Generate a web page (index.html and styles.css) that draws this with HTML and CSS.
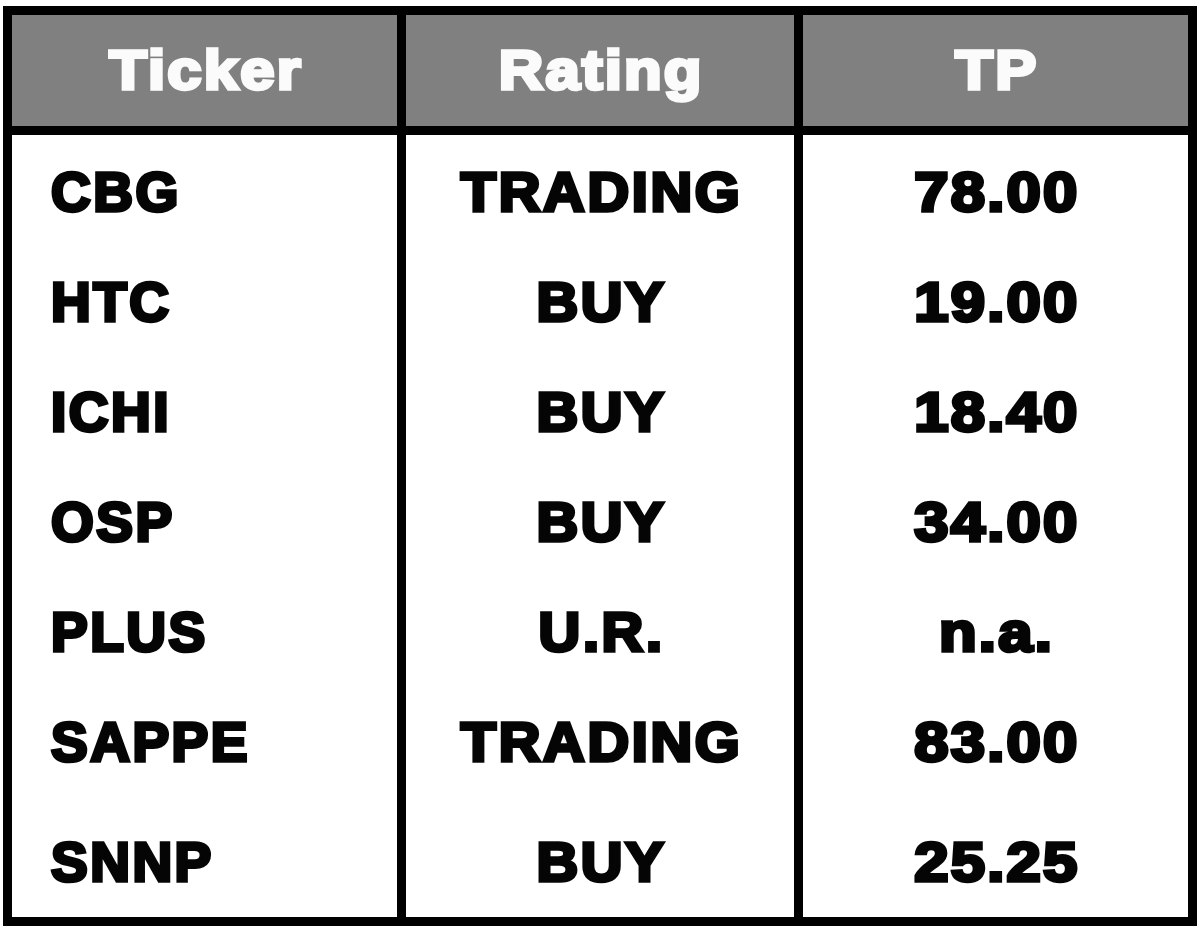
FILE: index.html
```html
<!DOCTYPE html>
<html>
<head>
<meta charset="utf-8">
<link rel="stylesheet" href="styles.css">
</head>
<body>
<div class="table">
  <div class="head">
    <div class="cell"><span class="txt">Ticker</span></div>
    <div class="cell"><span class="txt">Rating</span></div>
    <div class="cell"><span class="txt">TP</span></div>
  </div>
  <div class="body">
    <div class="col col-ticker">
      <div class="row"><span class="txt">CBG</span></div>
      <div class="row"><span class="txt">HTC</span></div>
      <div class="row"><span class="txt">ICHI</span></div>
      <div class="row"><span class="txt">OSP</span></div>
      <div class="row"><span class="txt">PLUS</span></div>
      <div class="row"><span class="txt">SAPPE</span></div>
      <div class="row row-last"><span class="txt">SNNP</span></div>
    </div>
    <div class="col col-rating">
      <div class="row"><span class="txt">TRADING</span></div>
      <div class="row"><span class="txt">BUY</span></div>
      <div class="row"><span class="txt">BUY</span></div>
      <div class="row"><span class="txt">BUY</span></div>
      <div class="row"><span class="txt">U.R.</span></div>
      <div class="row"><span class="txt">TRADING</span></div>
      <div class="row row-last"><span class="txt">BUY</span></div>
    </div>
    <div class="col col-tp">
      <div class="row"><span class="txt">78.00</span></div>
      <div class="row"><span class="txt">19.00</span></div>
      <div class="row"><span class="txt">18.40</span></div>
      <div class="row"><span class="txt">34.00</span></div>
      <div class="row"><span class="txt">n.a.</span></div>
      <div class="row"><span class="txt">83.00</span></div>
      <div class="row row-last"><span class="txt">25.25</span></div>
    </div>
  </div>
</div>
</body>
</html>
```
FILE: styles.css
```css
html, body {
  margin: 0;
  padding: 0;
  background: #ffffff;
}
body {
  font-family: "Liberation Sans", Arial, sans-serif;
  font-weight: 700;
}
.txt {
  display: inline-block;
  white-space: nowrap;
}
.table {
  width: 1176px;
  margin: 6px 0 0 3px;
  border: 9px solid #000;
  background: #fff;
}
.head {
  display: grid;
  grid-template-columns: 385px 397px 394px;
  height: 111px;
  background: #808080;
  border-bottom: 9px solid #000;
}
.head .cell {
  display: flex;
  align-items: center;
  justify-content: center;
  color: #fbfbfb;
  font-size: 56px;
  -webkit-text-stroke: 3.5px #fbfbfb;
  padding-bottom: 2px;
}
.head .txt {
  letter-spacing: 2px;
  padding-left: 2px;
  transform: scaleX(1.1);
}
.head .cell + .cell {
  border-left: 9px solid #000;
}
.body {
  display: grid;
  grid-template-columns: 385px 397px 394px;
  height: 782px;
}
.col {
  display: flex;
  flex-direction: column;
  padding-top: 2px;
  color: #050505;
  font-size: 55px;
  -webkit-text-stroke: 3.5px #050505;
}
.col + .col {
  border-left: 9px solid #000;
}
.row {
  height: 110px;
  display: flex;
  align-items: center;
  flex-shrink: 0;
}
.row-last {
  height: 110px;
  padding-top: 10px;
}
.col-ticker .row {
  padding-left: 39px;
}
.col-ticker .txt {
  letter-spacing: 2.5px;
}
.col-rating .row {
  justify-content: center;
}
.col-rating .txt {
  letter-spacing: 2.5px;
  padding-left: 2.5px;
  transform: scaleX(1.05);
}
.col-tp .row {
  justify-content: center;
}
.col-tp .txt {
  letter-spacing: 2px;
  padding-left: 2px;
  transform: scaleX(1.12);
}
```
